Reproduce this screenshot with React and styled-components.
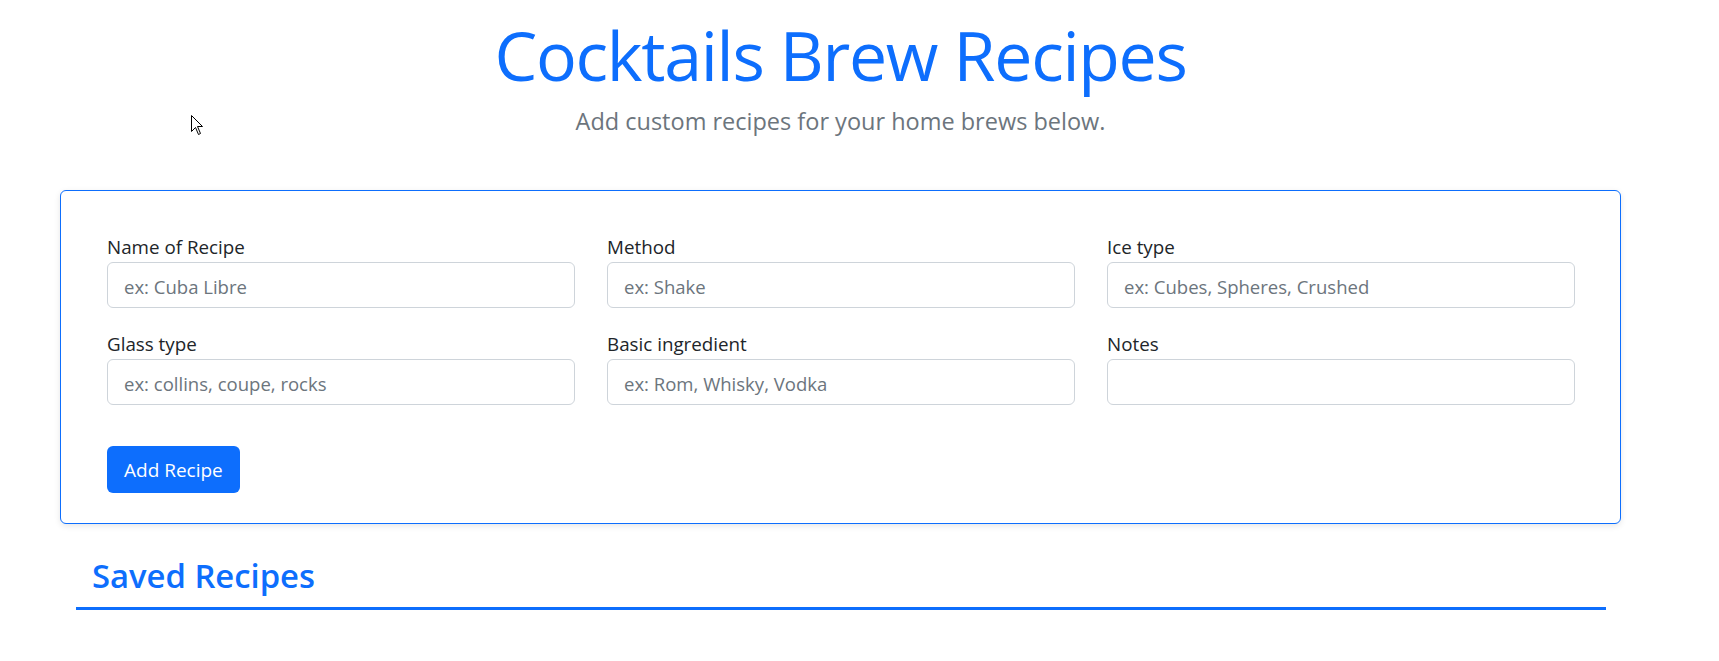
import React from 'react';
import styled, { createGlobalStyle } from 'styled-components';

const GlobalStyle = createGlobalStyle`
  html, body { margin: 0; padding: 0; background: #fff; }
  body { font-family: "Open Sans", sans-serif; color: #212529; }
  * { box-sizing: border-box; }
`;

const Page = styled.div`
  position: relative;
  padding-left: 60px;
`;

const Container = styled.main`
  width: 1561px;
`;

const Header = styled.header`
  text-align: center;
  padding-top: 13px;
`;

const Title = styled.h1`
  margin: 0;
  font-size: 68px;
  line-height: 84px;
  font-weight: 400;
  letter-spacing: -1.3px;
  color: #0d6efd;
`;

const Lead = styled.p`
  margin: 9px 0 0;
  font-size: 23.5px;
  line-height: 30px;
  font-weight: 400;
  color: #6c757d;
`;

const Card = styled.form`
  margin-top: 54px;
  border: 1px solid #0d6efd;
  border-radius: 6px;
  box-shadow: 0 2px 6px rgba(0, 0, 0, 0.1);
  padding: 45px 45px 30px 46px;
  background: #fff;
`;

const Grid = styled.div`
  display: grid;
  grid-template-columns: repeat(3, 468px);
  column-gap: 32px;
  row-gap: 25px;
`;

const Field = styled.div`
  display: flex;
  flex-direction: column;
`;

const Label = styled.label`
  font-size: 18.8px;
  line-height: 22px;
  margin-bottom: 4px;
  color: #212529;
`;

const Input = styled.input`
  height: 46px;
  padding: 2px 16px 0;
  font-family: inherit;
  font-size: 18.55px;
  color: #212529;
  background: #fff;
  border: 1px solid #ced4da;
  border-radius: 6px;
  outline: none;
  &::placeholder { color: #6c757d; opacity: 1; }
`;

const Button = styled.button`
  display: block;
  margin-top: 41px;
  height: 47px;
  padding: 0 17px;
  font-family: inherit;
  font-size: 19px;
  color: #fff;
  background: #0d6efd;
  border: none;
  border-radius: 6px;
  cursor: pointer;
`;

const Saved = styled.section`
  margin: 0 15px 0 16px;
  border-bottom: 3px solid #0d6efd;
  padding: 0 16px 11px;
`;

const SavedTitle = styled.h2`
  margin: 0;
  padding-top: 32px;
  font-size: 32.8px;
  line-height: 40px;
  font-weight: 600;
  color: #0d6efd;
`;

const Cursor = styled.svg`
  position: absolute;
  left: 191px;
  top: 115px;
`;

const fields = [
  ['Name of Recipe', 'ex: Cuba Libre'],
  ['Method', 'ex: Shake'],
  ['Ice type', 'ex: Cubes, Spheres, Crushed'],
  ['Glass type', 'ex: collins, coupe, rocks'],
  ['Basic ingredient', 'ex: Rom, Whisky, Vodka'],
  ['Notes', ''],
];

export default function App() {
  return (
    <Page>
      <GlobalStyle />
      <Container>
        <Header>
          <Title>Cocktails Brew Recipes</Title>
          <Lead>Add custom recipes for your home brews below.</Lead>
        </Header>
        <Card onSubmit={(e) => e.preventDefault()}>
          <Grid>
            {fields.map(([label, ph]) => (
              <Field key={label}>
                <Label>{label}</Label>
                <Input placeholder={ph} />
              </Field>
            ))}
          </Grid>
          <Button type="submit">Add Recipe</Button>
        </Card>
        <Saved>
          <SavedTitle>Saved Recipes</SavedTitle>
        </Saved>
      </Container>
      <Cursor width="13" height="21" viewBox="0 0 13 21">
        <path d="M0.5 0.5 L0.5 16.5 L4.5 12.5 L7.5 19.5 L9.5 18.5 L6.5 11.5 L11.5 11.5 Z" fill="#fff" stroke="#000" strokeWidth="1" />
      </Cursor>
    </Page>
  );
}
